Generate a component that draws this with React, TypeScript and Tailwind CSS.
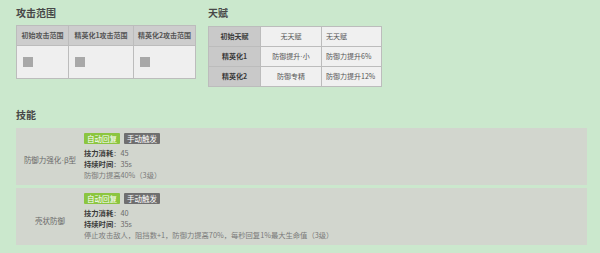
const font = { fontFamily: '"Noto Sans CJK SC", "Noto Sans", sans-serif' };

const ranges = ["初始攻击范围", "精英化1攻击范围", "精英化2攻击范围"];

const dot = <span style={{ fontFamily: '"Liberation Sans", sans-serif' }}>·</span>;

const talents: [string, React.ReactNode, string][] = [
  ["初始天赋", "无天赋", "无天赋"],
  ["精英化1", <>防御提升{dot}小</>, "防御力提升6%"],
  ["精英化2", "防御专精", "防御力提升12%"],
];

const skills = [
  {
    key: "s1",
    name: <>防御力强化{dot}β型</>,
    cost: "45",
    time: "35s",
    desc: "防御力提高40%（3级）",
  },
  {
    key: "s2",
    name: "壳状防御",
    cost: "40",
    time: "35s",
    desc: "停止攻击敌人，阻挡数+1，防御力提高70%，每秒回复1%最大生命值（3级）",
  },
];

function Title({ children }: { children: React.ReactNode }) {
  return <h2 className="text-[10px] leading-[12px] font-bold text-[#484848]">{children}</h2>;
}

function SkillBox({ s }: { s: (typeof skills)[number] }) {
  return (
    <div className="flex bg-[#d2d6ce] h-[57px] items-center">
      <div className="w-[68px] text-center text-[7.5px] text-[#6a6a6a] pt-[8px]">{s.name}</div>
      <div className="flex flex-col text-[7.3px] leading-[11px] text-[#6a6a6a]">
        <div className="flex gap-[4px] mb-[4px]">
          <span className="bg-[#8bc53f] text-white px-[3px] h-[11px] leading-[11px] text-[7.5px] rounded-[1px]">
            自动回复
          </span>
          <span className="bg-[#6f6f6f] text-white px-[3px] h-[11px] leading-[11px] text-[7.5px] rounded-[1px]">
            手动触发
          </span>
        </div>
        <div>
          <b className="text-[#3a3a3a]">技力消耗</b>：{s.cost}
        </div>
        <div>
          <b className="text-[#3a3a3a]">持续时间</b>：{s.time}
        </div>
        <div className="text-[#7a7a7a]">{s.desc}</div>
      </div>
    </div>
  );
}

export default function App() {
  return (
    <div style={font} className="w-[600px] h-[253px] bg-[#cbe8cd] pl-[16px] pr-[13px] pt-[7px] overflow-hidden">
      <div className="flex gap-[12px]">
        {/*range*/}
        <div>
          <Title>攻击范围</Title>
          <table className="mt-[6px] border-collapse text-[7px] text-[#555]">
            <tbody>
              <tr className="h-[20px] bg-[#cdcdcd]">
                {ranges.map((r, i) => (
                  <th
                    key={r}
                    className={`border border-[#bcbcbc] font-semibold px-[2px] ${
                      i === 0 ? "w-[52px]" : i === 1 ? "w-[65px]" : "w-[62px]"
                    }`}
                  >
                    {r}
                  </th>
                ))}
              </tr>
              <tr className="h-[33px] bg-[#efefef]">
                {ranges.map((r) => (
                  <td key={r} className="border border-[#bcbcbc] pl-[6px]">
                    <div className="w-[10px] h-[10px] bg-[#a8a8a8]" />
                  </td>
                ))}
              </tr>
            </tbody>
          </table>
        </div>

        {/*talent*/}
        <div>
          <Title>天赋</Title>
          <table className="mt-[7px] border-collapse text-[7px] text-[#555]">
            <tbody>
              {talents.map((t) => (
                <tr key={t[0]} className="h-[20px]">
                  <td className="w-[52px] border border-[#bcbcbc] bg-[#c9c9c9] text-center font-bold text-[#3a3a3a]">
                    {t[0]}
                  </td>
                  <td className="w-[61px] border border-[#bcbcbc] bg-[#f0f0f0] text-center">{t[1]}</td>
                  <td className="w-[60px] border border-[#bcbcbc] bg-[#f0f0f0] pl-[4px]">{t[2]}</td>
                </tr>
              ))}
            </tbody>
          </table>
        </div>
      </div>

      {/*skills*/}
      <div className="mt-[22px]">
        <Title>技能</Title>
        <div className="mt-[7px] flex flex-col gap-[3px]">
          {skills.map((s) => (
            <SkillBox key={s.key} s={s} />
          ))}
        </div>
      </div>
    </div>
  );
}
